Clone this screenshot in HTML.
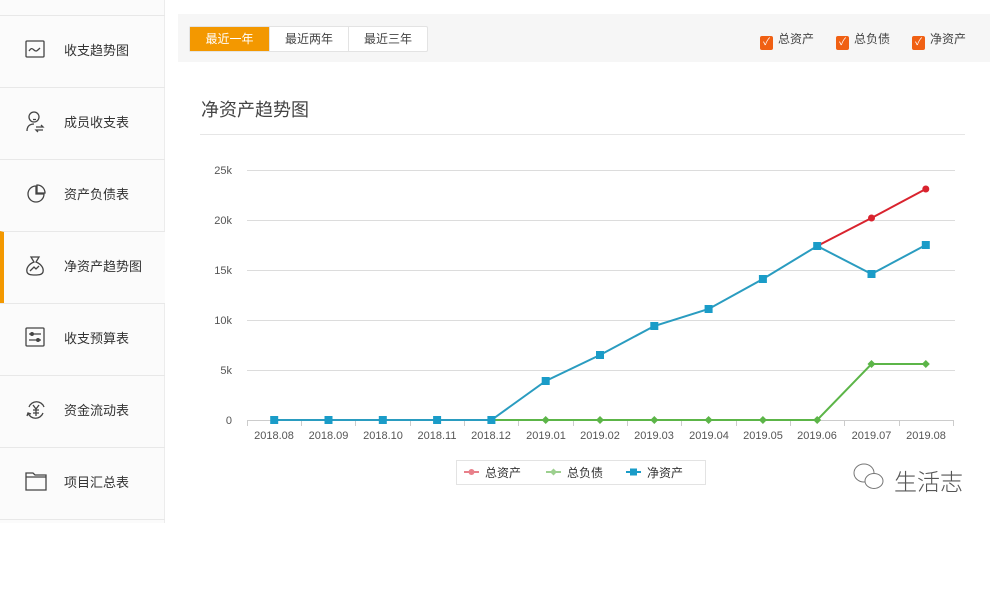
<!DOCTYPE html>
<html><head><meta charset="utf-8"><style>
*{margin:0;padding:0;box-sizing:border-box}
body{width:999px;height:523px;background:#fff;font-family:"Liberation Sans","Noto Sans CJK SC",sans-serif;position:relative;overflow:hidden;color:#333}
.side{position:absolute;left:0;top:0;width:165px;height:523px;background:#fbfbfb;border-right:1px solid #ececec}
.item{position:absolute;left:0;width:165px;height:72px;border-top:1px solid #e8e8e8;font-size:13px;color:#333}
.item span{position:absolute;left:64px;top:24px}
.item svg{position:absolute;left:24px;top:22px}
.active{background:#fbfbfb;border-left:4px solid #f39800}
.top{position:absolute;left:178px;top:14px;width:812px;height:48px;background:#f6f6f6}
.btns{position:absolute;left:189px;top:26px;height:26px;display:flex;border:1px solid #e3e3e3;border-radius:2px;background:#fff;font-size:12px}
.btns div{width:79px;text-align:center;line-height:24px;color:#444;border-left:1px solid #e3e3e3}
.btns div.on{background:#f39800;color:#fff;border-left:none;width:79px}
.chk{position:absolute;top:30px;font-size:12px;color:#444}
.chk i{display:inline-block;width:13px;height:14px;background:#f06013;border-radius:2px;vertical-align:-2px;margin-right:5px;color:#fff;font-style:normal;font-size:10px;text-align:center;line-height:14px}
.title{position:absolute;left:201px;top:96px;font-size:18px;color:#444}
.hl{position:absolute;left:200px;top:134px;width:765px;height:1px;background:#e6e6e6}
</style></head><body>
<div class="side">
<div class="item" style="top:15px"><svg width="22" height="22" viewBox="0 0 22 22" fill="none" stroke="#444" stroke-width="1.3"><rect x="2" y="3" width="18" height="16" rx="1"/><path d="M5 13c2-3 3-3 5-1s3 1 6-2"/></svg><span>收支趋势图</span></div>
<div class="item" style="top:87px"><svg width="22" height="24" viewBox="0 0 22 24" fill="none" stroke="#444" stroke-width="1.3"><circle cx="10" cy="7" r="5"/><path d="M9 9.5h3M3 21c0-5 3-7 7-7M12 17h7l-2-2M19 20h-7l2 2"/></svg><span>成员收支表</span></div>
<div class="item" style="top:159px"><svg width="24" height="24" viewBox="0 0 24 24" fill="none" stroke="#444" stroke-width="1.3"><path d="M12 4a8 8 0 1 0 8 8h-8z"/><path d="M13 3v8h8a8 8 0 0 0-8-8z"/></svg><span>资产负债表</span></div>
<div class="item active" style="top:231px"><svg width="22" height="24" viewBox="0 0 22 24" fill="none" stroke="#444" stroke-width="1.3" style="left:20px"><path d="M7 3h8l-3 5c5 2 8 6 7 10-1 3-5 3-8 3s-7 0-8-3c-1-4 2-8 7-10z"/><path d="M6 17l4-4 2 2 3-3"/></svg><span style="left:60px">净资产趋势图</span></div>
<div class="item" style="top:303px"><svg width="22" height="22" viewBox="0 0 22 22" fill="none" stroke="#444" stroke-width="1.3"><rect x="2" y="2" width="18" height="18" rx="1"/><path d="M5 8h12M5 14h12"/><circle cx="8" cy="8" r="1.3" fill="#444"/><circle cx="14" cy="14" r="1.3" fill="#444"/></svg><span>收支预算表</span></div>
<div class="item" style="top:375px"><svg width="24" height="24" viewBox="0 0 24 24" fill="none" stroke="#444" stroke-width="1.3"><path d="M5 9a8 8 0 0 1 15 0M19 15a8 8 0 0 1-15 0M3 18l1-3 3 1"/><path d="M9 7l3 4 3-4M12 11v7M9 12h6M9 15h6"/></svg><span>资金流动表</span></div>
<div class="item" style="top:447px"><svg width="24" height="22" viewBox="0 0 24 22" fill="none" stroke="#444" stroke-width="1.3"><path d="M2 3h7l2 2h11v15H2z"/><path d="M2 7h20"/></svg><span>项目汇总表</span></div>
<div class="item" style="top:519px"></div>
</div>
<div class="top"></div>
<div class="btns"><div class="on">最近一年</div><div>最近两年</div><div>最近三年</div></div>
<div class="chk" style="left:760px"><i>✓</i>总资产</div>
<div class="chk" style="left:836px"><i>✓</i>总负债</div>
<div class="chk" style="left:912px"><i>✓</i>净资产</div>
<div class="title">净资产趋势图</div>
<div class="hl"></div>
<svg width="999" height="523" style="position:absolute;left:0;top:0" font-family="Liberation Sans, sans-serif">
<g stroke="#dcdcdc" stroke-width="1">
<line x1="247" y1="170.5" x2="955" y2="170.5"/><line x1="247" y1="220.5" x2="955" y2="220.5"/><line x1="247" y1="270.5" x2="955" y2="270.5"/><line x1="247" y1="320.5" x2="955" y2="320.5"/><line x1="247" y1="370.5" x2="955" y2="370.5"/>
<line x1="247" y1="420.5" x2="953" y2="420.5" stroke="#ccc"/>
</g>
<g stroke="#ccc"><line x1="247.5" y1="420" x2="247.5" y2="426"/><line x1="301.5" y1="420" x2="301.5" y2="426"/><line x1="355.5" y1="420" x2="355.5" y2="426"/><line x1="410.5" y1="420" x2="410.5" y2="426"/><line x1="464.5" y1="420" x2="464.5" y2="426"/><line x1="518.5" y1="420" x2="518.5" y2="426"/><line x1="573.5" y1="420" x2="573.5" y2="426"/><line x1="627.5" y1="420" x2="627.5" y2="426"/><line x1="681.5" y1="420" x2="681.5" y2="426"/><line x1="736.5" y1="420" x2="736.5" y2="426"/><line x1="790.5" y1="420" x2="790.5" y2="426"/><line x1="844.5" y1="420" x2="844.5" y2="426"/><line x1="899.5" y1="420" x2="899.5" y2="426"/><line x1="953.5" y1="420" x2="953.5" y2="426"/></g>
<g font-size="11" fill="#555" text-anchor="end"><text x="232" y="174">25k</text><text x="232" y="224">20k</text><text x="232" y="274">15k</text><text x="232" y="324">10k</text><text x="232" y="374">5k</text><text x="232" y="424">0</text></g>
<g font-size="11" fill="#555" text-anchor="middle"><text x="274" y="439">2018.08</text><text x="328.5" y="439">2018.09</text><text x="383" y="439">2018.10</text><text x="437" y="439">2018.11</text><text x="491" y="439">2018.12</text><text x="546" y="439">2019.01</text><text x="600" y="439">2019.02</text><text x="654" y="439">2019.03</text><text x="709" y="439">2019.04</text><text x="763" y="439">2019.05</text><text x="817" y="439">2019.06</text><text x="871.5" y="439">2019.07</text><text x="926" y="439">2019.08</text></g>
<polyline fill="none" stroke="#d9232e" stroke-width="2" points="817.2,246 871.5,218 925.8,189"/>
<circle cx="871.5" cy="218" r="3.5" fill="#d9232e"/><circle cx="925.8" cy="189" r="3.5" fill="#d9232e"/>
<polyline fill="none" stroke="#5cb548" stroke-width="2" points="491.4,420 545.7,420 600,420 654.3,420 708.6,420 762.9,420 817.2,420 871.5,364 925.8,364"/>
<g fill="#5cb548"><path d="M545.7 416l4 4-4 4-4-4z"/><path d="M600 416l4 4-4 4-4-4z"/><path d="M654.3 416l4 4-4 4-4-4z"/><path d="M708.6 416l4 4-4 4-4-4z"/><path d="M762.9 416l4 4-4 4-4-4z"/><path d="M817.2 416l4 4-4 4-4-4z"/><path d="M871.5 360l4 4-4 4-4-4z"/><path d="M925.8 360l4 4-4 4-4-4z"/></g>
<polyline fill="none" stroke="#2a9cc0" stroke-width="2" points="274.2,420 328.5,420 382.8,420 437.1,420 491.4,420 545.7,381 600,355 654.3,326 708.6,309 762.9,279 817.2,246 871.5,274 925.8,245"/>
<g fill="#1a9cc8"><rect x="270.2" y="416" width="8" height="8"/><rect x="324.5" y="416" width="8" height="8"/><rect x="378.8" y="416" width="8" height="8"/><rect x="433.1" y="416" width="8" height="8"/><rect x="487.4" y="416" width="8" height="8"/><rect x="541.7" y="377" width="8" height="8"/><rect x="596" y="351" width="8" height="8"/><rect x="650.3" y="322" width="8" height="8"/><rect x="704.6" y="305" width="8" height="8"/><rect x="758.9" y="275" width="8" height="8"/><rect x="813.2" y="242" width="8" height="8"/><rect x="867.5" y="270" width="8" height="8"/><rect x="921.8" y="241" width="8" height="8"/></g>
<rect x="456.5" y="460.5" width="249" height="24" fill="none" stroke="#e3e3e3"/>
<line x1="464" y1="472" x2="479" y2="472" stroke="#e8808a" stroke-width="2"/><circle cx="471.5" cy="472" r="3" fill="#e8808a"/>
<text x="485" y="477" font-size="12" fill="#333" font-family="Liberation Sans, Noto Sans CJK SC, sans-serif">总资产</text>
<line x1="546" y1="472" x2="561" y2="472" stroke="#9dd08f" stroke-width="2"/><path d="M553.5 468.5l3.5 3.5-3.5 3.5-3.5-3.5z" fill="#9dd08f"/>
<text x="567" y="477" font-size="12" fill="#333" font-family="Liberation Sans, Noto Sans CJK SC, sans-serif">总负债</text>
<line x1="626" y1="472" x2="641" y2="472" stroke="#1a9cc8" stroke-width="2"/><rect x="630" y="468.5" width="7" height="7" fill="#1a9cc8"/>
<text x="647" y="477" font-size="12" fill="#333" font-family="Liberation Sans, Noto Sans CJK SC, sans-serif">净资产</text>
<g fill="none" stroke="#777" stroke-width="1"><ellipse cx="864" cy="473" rx="10" ry="9"/><ellipse cx="874" cy="481" rx="9" ry="7.5" fill="#fff"/></g>
<text x="894" y="490" font-size="23" fill="#555" font-family="Noto Sans CJK SC, sans-serif" font-weight="300">生活志</text>
</svg>
</body></html>
